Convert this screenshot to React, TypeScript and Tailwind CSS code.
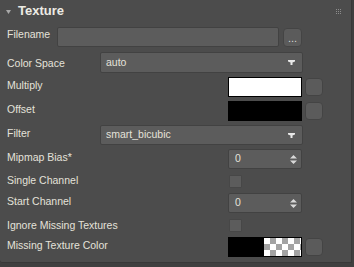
import React from "react";

const font = { fontFamily: '"Liberation Sans", Arial, sans-serif' };

function DropArrow() {
  return (
    <svg width="7" height="5" viewBox="0 0 7 5" className="shrink-0">
      <path d="M0 0h7v1.5L4.5 2.5V5h-2V2.5L0 1.5z" fill="#e8e8e8" />
    </svg>
  );
}

function SpinArrows() {
  return (
    <svg width="7" height="9" viewBox="0 0 7 9" className="shrink-0">
      <path d="M3.5 0L7 3.5H0z M0 5.5h7L3.5 9z" fill="#d8d8d8" />
    </svg>
  );
}

function Label({ children, className = "w-[92px]" }: { children: React.ReactNode; className?: string }) {
  return (
    <div className={`shrink-0 pl-[7px] text-[10.5px] leading-[14px] text-[#e4e2da] whitespace-nowrap ${className}`}>
      {children}
    </div>
  );
}

function Row({ children, className = "" }: { children: React.ReactNode; className?: string }) {
  return <div className={`flex items-center h-[20px] ${className}`}>{children}</div>;
}

function Dropdown({ value, h = "h-[20px]" }: { value: string; h?: string }) {
  return (
    <div className={`ml-[8px] w-[203px] ${h} flex items-center justify-between pl-[5px] pr-[7px] bg-[#5c5c5c] border border-[#424242] rounded-[2px] text-[10.5px] text-[#e4e2da]`}>
      <span>{value}</span>
      <DropArrow />
    </div>
  );
}

function Spinner() {
  return (
    <div className="ml-auto mr-[49px] w-[74px] h-[20px] flex items-center justify-between pl-[6px] pr-[4px] bg-[#5c5c5c] border border-[#424242] rounded-[2px] text-[10.5px] text-[#e4e2da]">
      <span>0</span>
      <SpinArrows />
    </div>
  );
}

function SquareBtn() {
  return <div className="w-[18px] h-[18px] rounded-[4px] bg-[#5b5b5b] border border-[#444444] shrink-0" />;
}

function Swatch({ children }: { children: React.ReactNode }) {
  return (
    <div className="ml-auto flex items-center gap-[3px] mr-[28px]">
      <div className="w-[74px] h-[20px] border border-black flex overflow-hidden">{children}</div>
      <SquareBtn />
    </div>
  );
}

function Checkbox() {
  return <div className="ml-auto mr-[109px] w-[13px] h-[13px] bg-[#5c5c5c] border border-[#474747] rounded-[1px]" />;
}

export default function App() {
  const checker = {
    backgroundColor: "#fff",
    backgroundImage:
      "linear-gradient(45deg,#a3a3a3 25%,transparent 25%,transparent 75%,#a3a3a3 75%),linear-gradient(45deg,#a3a3a3 25%,transparent 25%,transparent 75%,#a3a3a3 75%)",
    backgroundSize: "12px 12px",
    backgroundPosition: "0 0,6px 6px",
  };

  return (
    <div className="w-[354px] h-[267px] bg-[#3f3f3f] overflow-hidden" style={font}>
      <div className="w-[352px] h-[263px] bg-[#4c4c4c] border-r border-b border-[#383838] rounded-bl-[3px] flex flex-col">
        {/* header */}
        <div className="h-[22px] flex items-center pl-[6px] pr-[10px]">
          <svg width="5" height="4" viewBox="0 0 5 4" className="mr-[7px] mt-[1px]">
            <path d="M0 0h5L2.5 4z" fill="#a8a8a8" />
          </svg>
          <span className="text-[13px] font-bold text-[#ecebe4]">Texture</span>
          <svg width="5" height="5" viewBox="0 0 5 5" className="ml-auto">
            {[0, 2, 4].map((y) =>
              [0, 2, 4].map((x) => <rect key={`${x}-${y}`} x={x} y={y} width="1" height="1" fill="#8c8c8c" />)
            )}
          </svg>
        </div>

        {/* Filename */}
        <Row className="mt-[5px]">
          <Label className="w-[57px] -mt-[7px]">Filename</Label>
          <div className="w-[222px] h-[20px] bg-[#5c5c5c] border border-[#424242] rounded-[2px]" />
          <div className="ml-[4px] w-[19px] h-[19px] rounded-[4px] bg-[#5b5b5b] border border-[#444444] flex items-end justify-center text-[11px] leading-[12px] text-[#d8d8d8] pb-[2px]">
            ...
          </div>
        </Row>

        {/* Color Space */}
        <Row className="mt-[5px] h-[21px]">
          <Label>Color Space</Label>
          <Dropdown value="auto" h="h-[21px]" />
        </Row>

        <Row className="mt-[4px]">
          <Label className="w-[92px] -mt-[4px]">Multiply</Label>
          <Swatch>
            <div className="flex-1 bg-white" />
          </Swatch>
        </Row>

        <Row className="mt-[4px]">
          <Label className="w-[92px] -mt-[4px]">Offset</Label>
          <Swatch>
            <div className="flex-1 bg-black" />
          </Swatch>
        </Row>

        <Row className="mt-[4px]">
          <Label className="w-[92px] -mt-[4px]">Filter</Label>
          <Dropdown value="smart_bicubic" />
        </Row>

        <Row className="mt-[4px]">
          <Label className="w-[92px] -mt-[4px]">Mipmap Bias*</Label>
          <Spinner />
        </Row>

        <Row className="mt-[2px]">
          <Label className="w-[92px] -mt-[2px]">Single Channel</Label>
          <Checkbox />
        </Row>

        <Row className="mt-[2px]">
          <Label className="w-[92px] -mt-[5px]">Start Channel</Label>
          <Spinner />
        </Row>

        <Row className="mt-[2px]">
          <Label className="w-[130px]">Ignore Missing Textures</Label>
          <Checkbox />
        </Row>

        <Row className="mt-[2px]">
          <Label className="w-[130px] -mt-[4px]">Missing Texture Color</Label>
          <Swatch>
            <div className="w-[35px] bg-black" />
            <div className="flex-1" style={checker} />
          </Swatch>
        </Row>
      </div>
    </div>
  );
}
